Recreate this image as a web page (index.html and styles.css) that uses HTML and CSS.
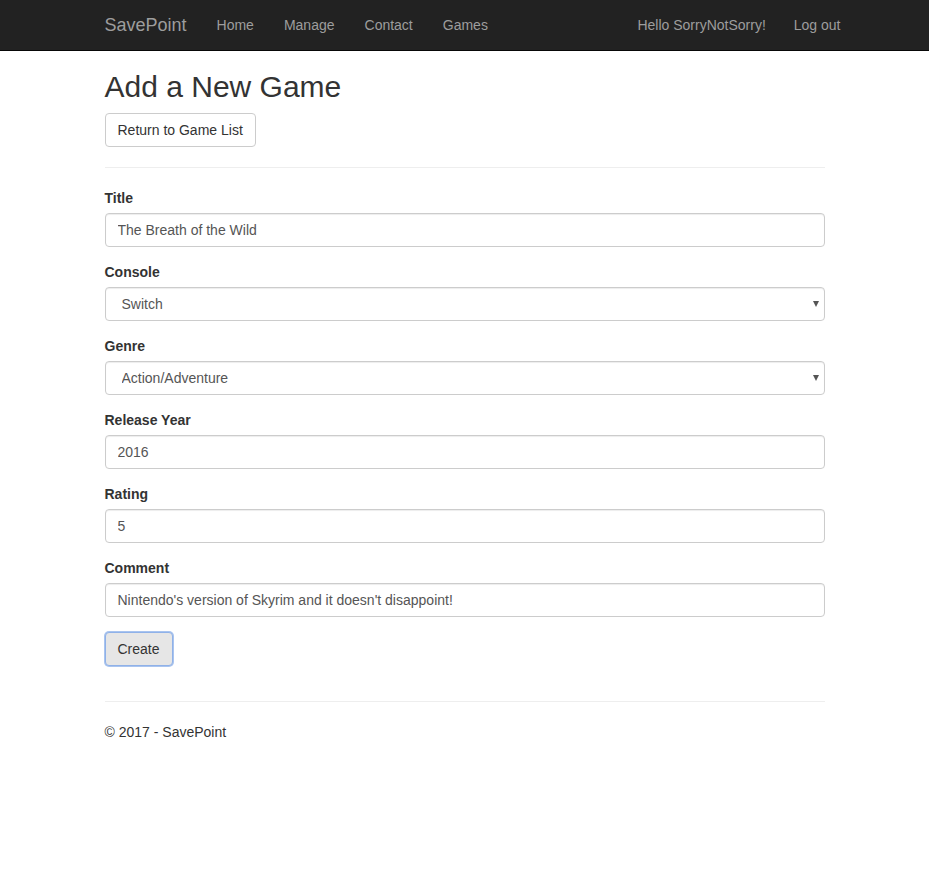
FILE: index.html
```html
<!DOCTYPE html>
<html lang="en">
<head>
<meta charset="utf-8">
<title>Add a New Game - SavePoint</title>
<link rel="stylesheet" href="styles.css">
</head>
<body>
<nav class="navbar">
  <div class="container nav-inner">
    <a class="brand" href="#">SavePoint</a>
    <ul class="nav">
      <li><a href="#">Home</a></li>
      <li><a href="#">Manage</a></li>
      <li><a href="#">Contact</a></li>
      <li><a href="#">Games</a></li>
    </ul>
    <ul class="nav nav-right">
      <li><a href="#">Hello SorryNotSorry!</a></li>
      <li><a href="#">Log out</a></li>
    </ul>
  </div>
</nav>
<main class="container body-content">
  <h2 class="title">Add a New Game</h2>
  <a class="btn" href="#">Return to Game List</a>
  <hr class="rule">
  <form class="form">
    <div class="form-group">
      <label class="label">Title</label>
      <input class="form-control" type="text" value="The Breath of the Wild">
    </div>
    <div class="form-group">
      <label class="label">Console</label>
      <div class="select-wrap">
        <select class="form-control select"><option>Switch</option></select>
      </div>
    </div>
    <div class="form-group">
      <label class="label">Genre</label>
      <div class="select-wrap">
        <select class="form-control select"><option>Action/Adventure</option></select>
      </div>
    </div>
    <div class="form-group">
      <label class="label">Release Year</label>
      <input class="form-control" type="text" value="2016">
    </div>
    <div class="form-group">
      <label class="label">Rating</label>
      <input class="form-control" type="text" value="5">
    </div>
    <div class="form-group">
      <label class="label">Comment</label>
      <input class="form-control" type="text" value="Nintendo's version of Skyrim and it doesn't disappoint!">
    </div>
    <div class="form-group">
      <button class="btn btn-active" type="button">Create</button>
    </div>
  </form>
  <hr class="rule">
  <footer class="footer">
    <p>&copy; 2017 - SavePoint</p>
  </footer>
</main>
</body>
</html>
```
FILE: styles.css
```css
* { box-sizing: border-box; }
html, body { margin: 0; padding: 0; }
body {
  font-family: "Liberation Sans", Arial, Helvetica, sans-serif;
  font-size: 14px;
  line-height: 1.42857143;
  color: #333;
  background: #fff;
}
a { text-decoration: none; }
.container {
  width: 750px;
  margin: 0 auto;
  padding: 0 15px;
}
.navbar {
  height: 51px;
  margin-bottom: -1px;
  background: #222;
  border-bottom: 1px solid #080808;
  position: relative;
  z-index: 1;
}
.nav-inner {
  display: flex;
  align-items: stretch;
  height: 50px;
}
.brand {
  font-size: 18px;
  line-height: 20px;
  padding: 15px 15px 15px 0;
  color: #9d9d9d;
}
.nav {
  list-style: none;
  margin: 0;
  padding: 0;
  display: flex;
}
.nav a {
  display: block;
  padding: 15px;
  line-height: 20px;
  color: #9d9d9d;
}
.nav-right {
  margin-left: auto;
  margin-right: -31px;
}
.nav-right li + li a { padding-left: 13px; }
.body-content { padding-top: 0; }
.title {
  font-size: 30px;
  font-weight: 500;
  line-height: 1.1;
  margin: 20px 0 10px;
  color: #333;
}
.btn {
  display: inline-block;
  padding: 6px 12px;
  font-family: inherit;
  font-size: 14px;
  line-height: 1.42857143;
  color: #333;
  background: #fff;
  border: 1px solid #ccc;
  border-radius: 4px;
  cursor: pointer;
}
.btn-active {
  background: #e6e6e6;
  border-color: #8fb1e8;
  box-shadow: 0 0 0 1px #a9c4ef;
}
.rule {
  margin: 20px 0;
  border: 0;
  border-top: 1px solid #eee;
  height: 0;
}
.form { margin: 0; display: flow-root; }
.form-group { margin-bottom: 15px; }
.label {
  display: inline-block;
  margin-bottom: 5px;
  font-weight: bold;
}
.form-control {
  display: block;
  width: 100%;
  height: 34px;
  padding: 6px 12px;
  font-family: inherit;
  font-size: 14px;
  line-height: 1.42857143;
  color: #555;
  background: #fff;
  border: 1px solid #ccc;
  border-radius: 4px;
  box-shadow: inset 0 1px 1px rgba(0,0,0,.075);
  margin: 0;
}
.select-wrap { position: relative; }
.select {
  appearance: none;
  -webkit-appearance: none;
  padding-left: 16px;
}
.select-wrap::after {
  content: "";
  position: absolute;
  right: 6px;
  top: 14px;
  border-left: 3.5px solid transparent;
  border-right: 3.5px solid transparent;
  border-top: 6px solid #555;
  pointer-events: none;
}
.footer p { margin: 0 0 10px; }
```
